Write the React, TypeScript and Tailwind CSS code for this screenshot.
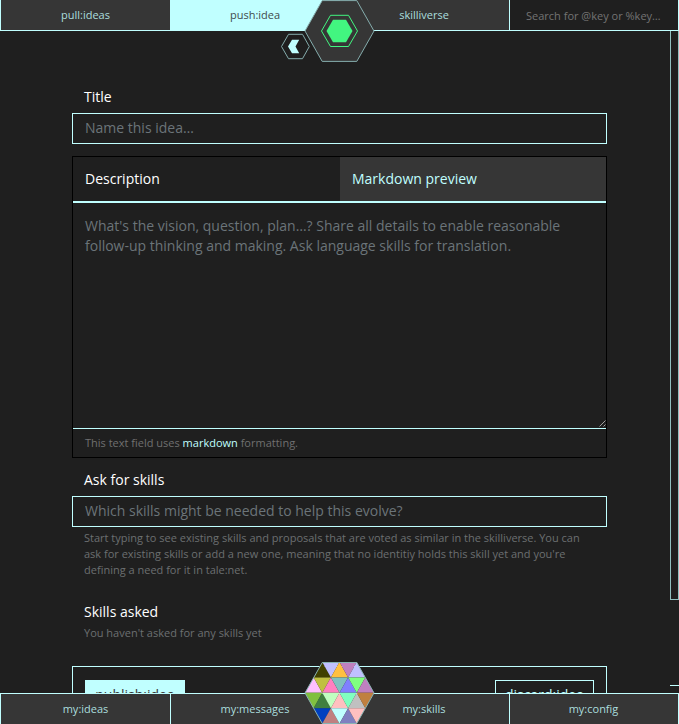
import React from "react";

const cell = 69 / 4;
const rowHeight = 61.5 / 4;

const rows: { x: number; down: boolean; colors: string[] }[] = [
  { x: 0.5, down: false, colors: ["#404000", "#c0c0ff", "#ffc040", "#c080c0", "#c0c0ff"] },
  { x: 0, down: false, colors: ["#ffc0ff", "#c0c040", "#ff80c0", "#80c0c0", "#8080ff", "#80ff80", "#c080c0"] },
  { x: 0, down: true, colors: ["#80c040", "#408040", "#c0ffc0", "#ffc0c0", "#80ffc0", "#c0c0c0", "#c08040"] },
  { x: 0.5, down: true, colors: ["#0040c0", "#c08080", "#c0ffff", "#8080c0", "#ffc0c0"] },
];

function IdentityHex() {
  return (
    <svg className="absolute left-[304px] top-[661px] z-20" width="71" height="63" viewBox="0 0 71 63">
      {rows.map((row, r) =>
        row.colors.map((color, i) => {
          const left = 1 + (row.x + i / 2) * cell;
          const down = row.down ? i % 2 === 0 : i % 2 === 1;
          const top = 1 + r * rowHeight;
          const bottom = top + rowHeight;
          const points = down
            ? `${left},${top} ${left + cell},${top} ${left + cell / 2},${bottom}`
            : `${left},${bottom} ${left + cell},${bottom} ${left + cell / 2},${top}`;
          return <polygon key={`${r}-${i}`} points={points} fill={color} />;
        }),
      )}
      <polygon points="1,32 18.25,1.5 52.75,1.5 70,32 52.75,62.5 18.25,62.5" fill="none" stroke="#88b3b3" strokeWidth="1" />
    </svg>
  );
}

function MenuHex() {
  return (
    <svg className="absolute left-[280px] top-0 z-20" width="96" height="64" viewBox="0 0 96 64">
      <polygon points="25,31 42.2,0.6 76.8,0.6 94,31 76.8,61.4 42.2,61.4" fill="#363636" stroke="#85adad" />
      <polygon points="41.5,31 50.5,15.3 68.5,15.3 77.5,31 68.5,46.5 50.5,46.5" fill="none" stroke="#42f680" />
      <polygon points="46.5,31 53,19.8 66,19.8 72.5,31 66,42.2 53,42.2" fill="#42f680" />
      <polygon points="1.5,46.5 8.5,34.3 22.5,34.3 29.3,46.5 22.5,58.7 8.5,58.7" fill="#1f1f1f" stroke="#85adad" />
      <polygon points="8,46.5 12,39.8 19.2,39.8 15.5,46.5 19.2,53.2 12,53.2" fill="#c0ffff" />
    </svg>
  );
}

export default function App() {
  return (
    <div className="relative flex h-[724px] w-[679px] flex-col overflow-hidden bg-[#1f1f1f] font-['Open_Sans',sans-serif] text-sm leading-5 text-white">
      <nav className="flex h-[31px] shrink-0 border-x border-b border-[#c0ffff] text-[11px] leading-[30px] text-[#abdede]">
        <div className="w-[169px] bg-[#363636] text-center">pull:ideas</div>
        <div className="w-[170px] bg-[#c0ffff] text-center text-[#404c4c]">push:idea</div>
        <div className="w-[169px] bg-[#363636] pr-px text-center">skilliverse</div>
        <div className="flex-1 border-l border-[#c0ffff]">
          <input
            className="block h-[31px] w-full bg-transparent pl-4 text-[11px] outline-none placeholder:text-[#737373]"
            placeholder="Search for @key or %key…"
          />
        </div>
      </nav>

      <div className="flex min-h-0 flex-1">
        <main className="ml-[72px] w-[535px] pt-14">
          <label className="block px-3">Title</label>
          <input
            className="mt-[6px] block h-[31px] w-full border border-[#c0ffff] bg-transparent px-3 pb-[2px] outline-none placeholder:text-[#6b7479]"
            placeholder="Name this idea…"
          />

          <section className="mt-3 border border-black">
            <div className="flex h-[46px] border-b-2 border-[#c0ffff] leading-[44px]">
              <div className="w-[267px] px-3">Description</div>
              <div className="flex-1 bg-[#363636] px-3 text-[#c0ffff]">Markdown preview</div>
            </div>
            <div className="relative">
              <textarea
                className="block h-[226px] w-full resize-none border-b border-[#c0ffff] bg-transparent px-3 py-[13px] leading-5 outline-none placeholder:text-[#6b7479]"
                placeholder="What's the vision, question, plan…? Share all details to enable reasonable follow-up thinking and making. Ask language skills for translation."
              />
              <svg className="absolute bottom-[2px] right-0" width="7" height="7" viewBox="0 0 7 7">
                <path d="M0.5 6.5L6.5 0.5M4.5 6.5L6.5 4.5" stroke="#a0a0a0" />
              </svg>
            </div>
            <p className="h-7 px-3 text-[11px] leading-7 text-[#707070]">
              This text field uses <span className="text-[#c0ffff]">markdown</span> formatting.
            </p>
          </section>

          <label className="mt-3 block px-3">Ask for skills</label>
          <input
            className="mt-[6px] block h-[31px] w-full border border-[#c0ffff] bg-transparent px-3 pb-[2px] outline-none placeholder:text-[#6b7479]"
            placeholder="Which skills might be needed to help this evolve?"
          />
          <p className="mt-[3px] px-3 text-[11px] leading-4 text-[#6c6f71]">
            Start typing to see existing skills and proposals that are voted as similar in the skilliverse. You can
            ask for existing skills or add a new one, meaning that no identitiy holds this skill yet and you're
            defining a need for it in tale:net.
          </p>

          <h2 className="mt-6 px-3">Skills asked</h2>
          <p className="mt-[3px] px-3 text-[11px] leading-4 text-[#6c6f71]">You haven't asked for any skills yet</p>

          <div className="mt-[25px] flex h-[60px] items-start justify-between border border-[#c0ffff] px-3 pt-[13px]">
            <button className="h-[30px] w-[100px] bg-[#c0ffff] text-[#363636]">publish:idea</button>
            <button className="h-[30px] w-[99px] border border-[#c0ffff] text-[#c0ffff]">discard:idea</button>
          </div>
        </main>
        <div className="ml-auto flex w-[9px] flex-col">
          <div className="h-[569px] border-x border-b border-[#90c0c0]" />
          <div className="mt-[85px] h-px bg-[#c0ffff]" />
        </div>
      </div>

      <nav className="z-10 grid h-[31px] shrink-0 grid-cols-[170px_169px_170px_168px] border border-b-0 border-[#c0ffff] bg-[#363636] text-center text-[11px] leading-[30px] text-[#abdede]">
        <div className="border-r border-[#c0ffff]">my:ideas</div>
        <div className="pr-px">my:messages</div>
        <div className="border-r border-[#c0ffff] pr-px">my:skills</div>
        <div className="pr-px">my:config</div>
      </nav>

      <MenuHex />
      <IdentityHex />
    </div>
  );
}
